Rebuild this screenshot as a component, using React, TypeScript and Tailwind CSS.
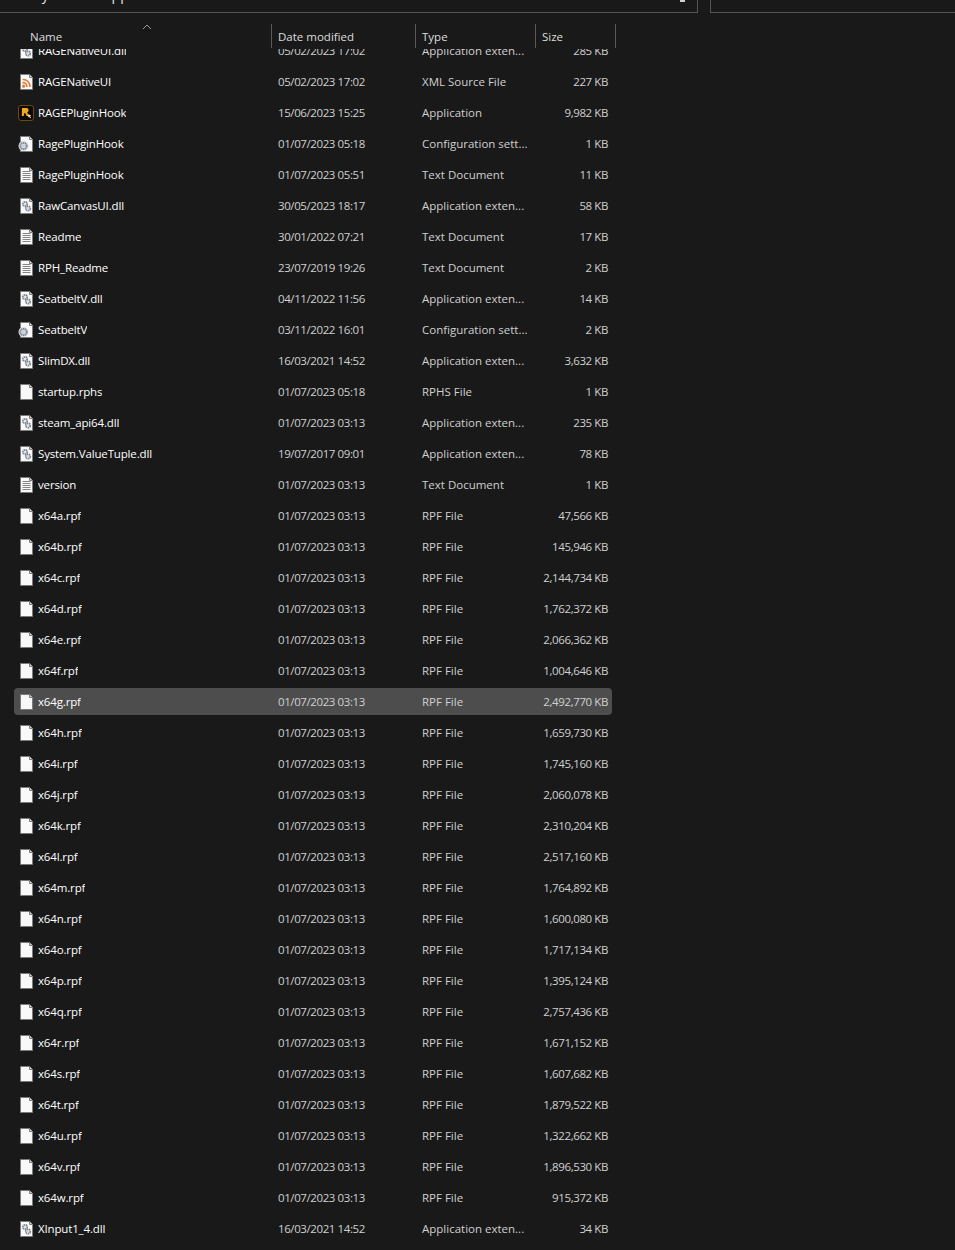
type IconKind = "dll" | "xml" | "app" | "cfg" | "txt" | "file";

type FileRow = {
    name: string;
    date: string;
    type: string;
    size: string;
    icon: IconKind;
    selected?: boolean;
};

const rpf = (name: string, size: string, selected?: boolean): FileRow => ({
    name,
    date: "01/07/2023 03:13",
    type: "RPF File",
    size,
    icon: "file",
    selected,
});

const files: FileRow[] = [
    { name: "RAGENativeUI.dll", date: "05/02/2023 17:02", type: "Application exten...", size: "285 KB", icon: "dll" },
    { name: "RAGENativeUI", date: "05/02/2023 17:02", type: "XML Source File", size: "227 KB", icon: "xml" },
    { name: "RAGEPluginHook", date: "15/06/2023 15:25", type: "Application", size: "9,982 KB", icon: "app" },
    { name: "RagePluginHook", date: "01/07/2023 05:18", type: "Configuration sett...", size: "1 KB", icon: "cfg" },
    { name: "RagePluginHook", date: "01/07/2023 05:51", type: "Text Document", size: "11 KB", icon: "txt" },
    { name: "RawCanvasUI.dll", date: "30/05/2023 18:17", type: "Application exten...", size: "58 KB", icon: "dll" },
    { name: "Readme", date: "30/01/2022 07:21", type: "Text Document", size: "17 KB", icon: "txt" },
    { name: "RPH_Readme", date: "23/07/2019 19:26", type: "Text Document", size: "2 KB", icon: "txt" },
    { name: "SeatbeltV.dll", date: "04/11/2022 11:56", type: "Application exten...", size: "14 KB", icon: "dll" },
    { name: "SeatbeltV", date: "03/11/2022 16:01", type: "Configuration sett...", size: "2 KB", icon: "cfg" },
    { name: "SlimDX.dll", date: "16/03/2021 14:52", type: "Application exten...", size: "3,632 KB", icon: "dll" },
    { name: "startup.rphs", date: "01/07/2023 05:18", type: "RPHS File", size: "1 KB", icon: "file" },
    { name: "steam_api64.dll", date: "01/07/2023 03:13", type: "Application exten...", size: "235 KB", icon: "dll" },
    { name: "System.ValueTuple.dll", date: "19/07/2017 09:01", type: "Application exten...", size: "78 KB", icon: "dll" },
    { name: "version", date: "01/07/2023 03:13", type: "Text Document", size: "1 KB", icon: "txt" },
    rpf("x64a.rpf", "47,566 KB"),
    rpf("x64b.rpf", "145,946 KB"),
    rpf("x64c.rpf", "2,144,734 KB"),
    rpf("x64d.rpf", "1,762,372 KB"),
    rpf("x64e.rpf", "2,066,362 KB"),
    rpf("x64f.rpf", "1,004,646 KB"),
    rpf("x64g.rpf", "2,492,770 KB", true),
    rpf("x64h.rpf", "1,659,730 KB"),
    rpf("x64i.rpf", "1,745,160 KB"),
    rpf("x64j.rpf", "2,060,078 KB"),
    rpf("x64k.rpf", "2,310,204 KB"),
    rpf("x64l.rpf", "2,517,160 KB"),
    rpf("x64m.rpf", "1,764,892 KB"),
    rpf("x64n.rpf", "1,600,080 KB"),
    rpf("x64o.rpf", "1,717,134 KB"),
    rpf("x64p.rpf", "1,395,124 KB"),
    rpf("x64q.rpf", "2,757,436 KB"),
    rpf("x64r.rpf", "1,671,152 KB"),
    rpf("x64s.rpf", "1,607,682 KB"),
    rpf("x64t.rpf", "1,879,522 KB"),
    rpf("x64u.rpf", "1,322,662 KB"),
    rpf("x64v.rpf", "1,896,530 KB"),
    rpf("x64w.rpf", "915,372 KB"),
    { name: "XInput1_4.dll", date: "16/03/2021 14:52", type: "Application exten...", size: "34 KB", icon: "dll" },
];

function Gear({ cx, cy, r = 2.2 }: { cx: number; cy: number; r?: number }) {
    return (
        <g>
            <circle cx={cx} cy={cy} r={r} fill="none" stroke="#7d8791" strokeWidth="1.8" strokeDasharray="1.5 0.5" />
            <circle cx={cx} cy={cy} r={r * 0.35} fill="#c4cad0" />
        </g>
    );
}

function FileIcon({ kind }: { kind: IconKind }) {
    if (kind === "app") {
        return (
            <svg width="16" height="16" viewBox="0 0 16 16" className="shrink-0">
                <rect x="0.5" y="0.5" width="15" height="15" rx="2.5" fill="#0d0a05" stroke="#6e4a10" />
                <path d="M4 3h4.6c2.4 0 2.7 3.6.6 4.3L10.8 11H8.6L7.2 7.9H6.3L5.8 11H3.8Z" fill="#f0a81e" />
                <path d="M10 9.2l3.4 1.3-1.4.6 1 1.6-.9.5-1-1.6-1 .9Z" fill="#f6e6b8" />
            </svg>
        );
    }
    return (
        <svg width="16" height="16" viewBox="0 0 16 16" className="shrink-0">
            <path d="M2.5 0.5H11.5L14.5 3.5V15.5H2.5Z" fill="#f9f9f9" stroke="#7c7c7c" />
            <path d="M11.5 0.5V3.5H14.5" fill="#d4d4d4" stroke="#7c7c7c" />
            {kind === "txt" && (
                <path d="M4.5 4.5h8M4.5 6.5h8M4.5 8.5h8M4.5 10.5h8M4.5 12.5h8" stroke="#858585" strokeWidth="1" />
            )}
            {kind === "xml" && (
                <g fill="none" stroke="#e07b35" strokeWidth="1.6">
                    <path d="M4.5 5.5a7 7 0 0 1 7.5 7.5" />
                    <path d="M4.5 8.7a3.8 3.8 0 0 1 4.4 4.3" />
                    <circle cx="5.6" cy="12.2" r="0.8" fill="#e07b35" />
                </g>
            )}
            {kind === "dll" && (
                <>
                    <Gear cx={7} cy={6} />
                    <Gear cx={10} cy={10.5} />
                </>
            )}
            {kind === "cfg" && (
                <>
                    <circle cx="5.5" cy="10" r="5" fill="#d9dcdf" />
                    <Gear cx={5.5} cy={10} r={3.2} />
                </>
            )}
        </svg>
    );
}

function Column({ label, width }: { label: string; width: string }) {
    return (
        <div className={`${width} h-6 border-r border-[#5a5a5a] pl-[6px] pt-[5px] leading-4 text-[#dedede]`}>
            {label}
        </div>
    );
}

export default function App() {
    return (
        <div
            className="h-[1250px] w-[955px] overflow-hidden bg-[#191919] text-[11.5px]"
            style={{ fontFamily: '"Open Sans", "Noto Sans", sans-serif' }}
        >
            {/* Address bar and search box, cut off by the top of the picture */}
            <div className="flex h-[13px] gap-3">
                <div className="flex w-[698px] items-start justify-between overflow-hidden border-r border-b border-[#555555] pr-3">
                    <div className="-mt-[13px] flex gap-[54px] pl-[22px] text-sm leading-4 text-[#e5e5e5]">
                        <span>Play</span>
                        <span>Apps</span>
                    </div>
                    <div className="h-[2px] w-[5px] bg-[#d0d0d0]" />
                </div>
                <div className="flex-1 border-b border-l border-[#555555]" />
            </div>

            {/* Column headers */}
            <div className="relative mt-[11px] flex h-6">
                <Column label="" width="w-[272px]" />
                <span className="absolute top-[5px] left-[30px] leading-4 text-[#dedede]">Name</span>
                <Column label="Date modified" width="w-[144px]" />
                <Column label="Type" width="w-[120px]" />
                <Column label="Size" width="w-[80px]" />
                <svg
                    width="10"
                    height="6"
                    viewBox="0 0 10 6"
                    className="absolute top-0 left-[142px]"
                    fill="none"
                    stroke="#9a9a9a"
                >
                    <path d="M1 5l4-4 4 4" />
                </svg>
            </div>

            {/* File list, scrolled so the first row is clipped under the header */}
            <div className="mt-px h-[1201px] overflow-hidden">
                <div className="-mt-3 flex flex-col gap-1 pl-[14px]">
                    {files.map((file, idx) => (
                        <div
                            key={idx}
                            className={`flex h-[27px] w-[598px] shrink-0 items-center rounded-sm ${
                                file.selected ? "bg-[#4d4d4d]" : ""
                            }`}
                        >
                            <div className="flex w-[257px] items-center gap-1 pl-1 text-white">
                                <FileIcon kind={file.icon} />
                                <span className="truncate tracking-[-0.15px]">{file.name}</span>
                            </div>
                            <div className="w-[144px] pl-[7px] tracking-[-0.4px] text-[#d0d0d0]">{file.date}</div>
                            <div className="w-[120px] pl-[7px] text-[#d0d0d0]">{file.type}</div>
                            <div className="w-[73px] text-right tracking-[-0.4px] text-[#d0d0d0]">{file.size}</div>
                        </div>
                    ))}
                </div>
            </div>
        </div>
    );
}
